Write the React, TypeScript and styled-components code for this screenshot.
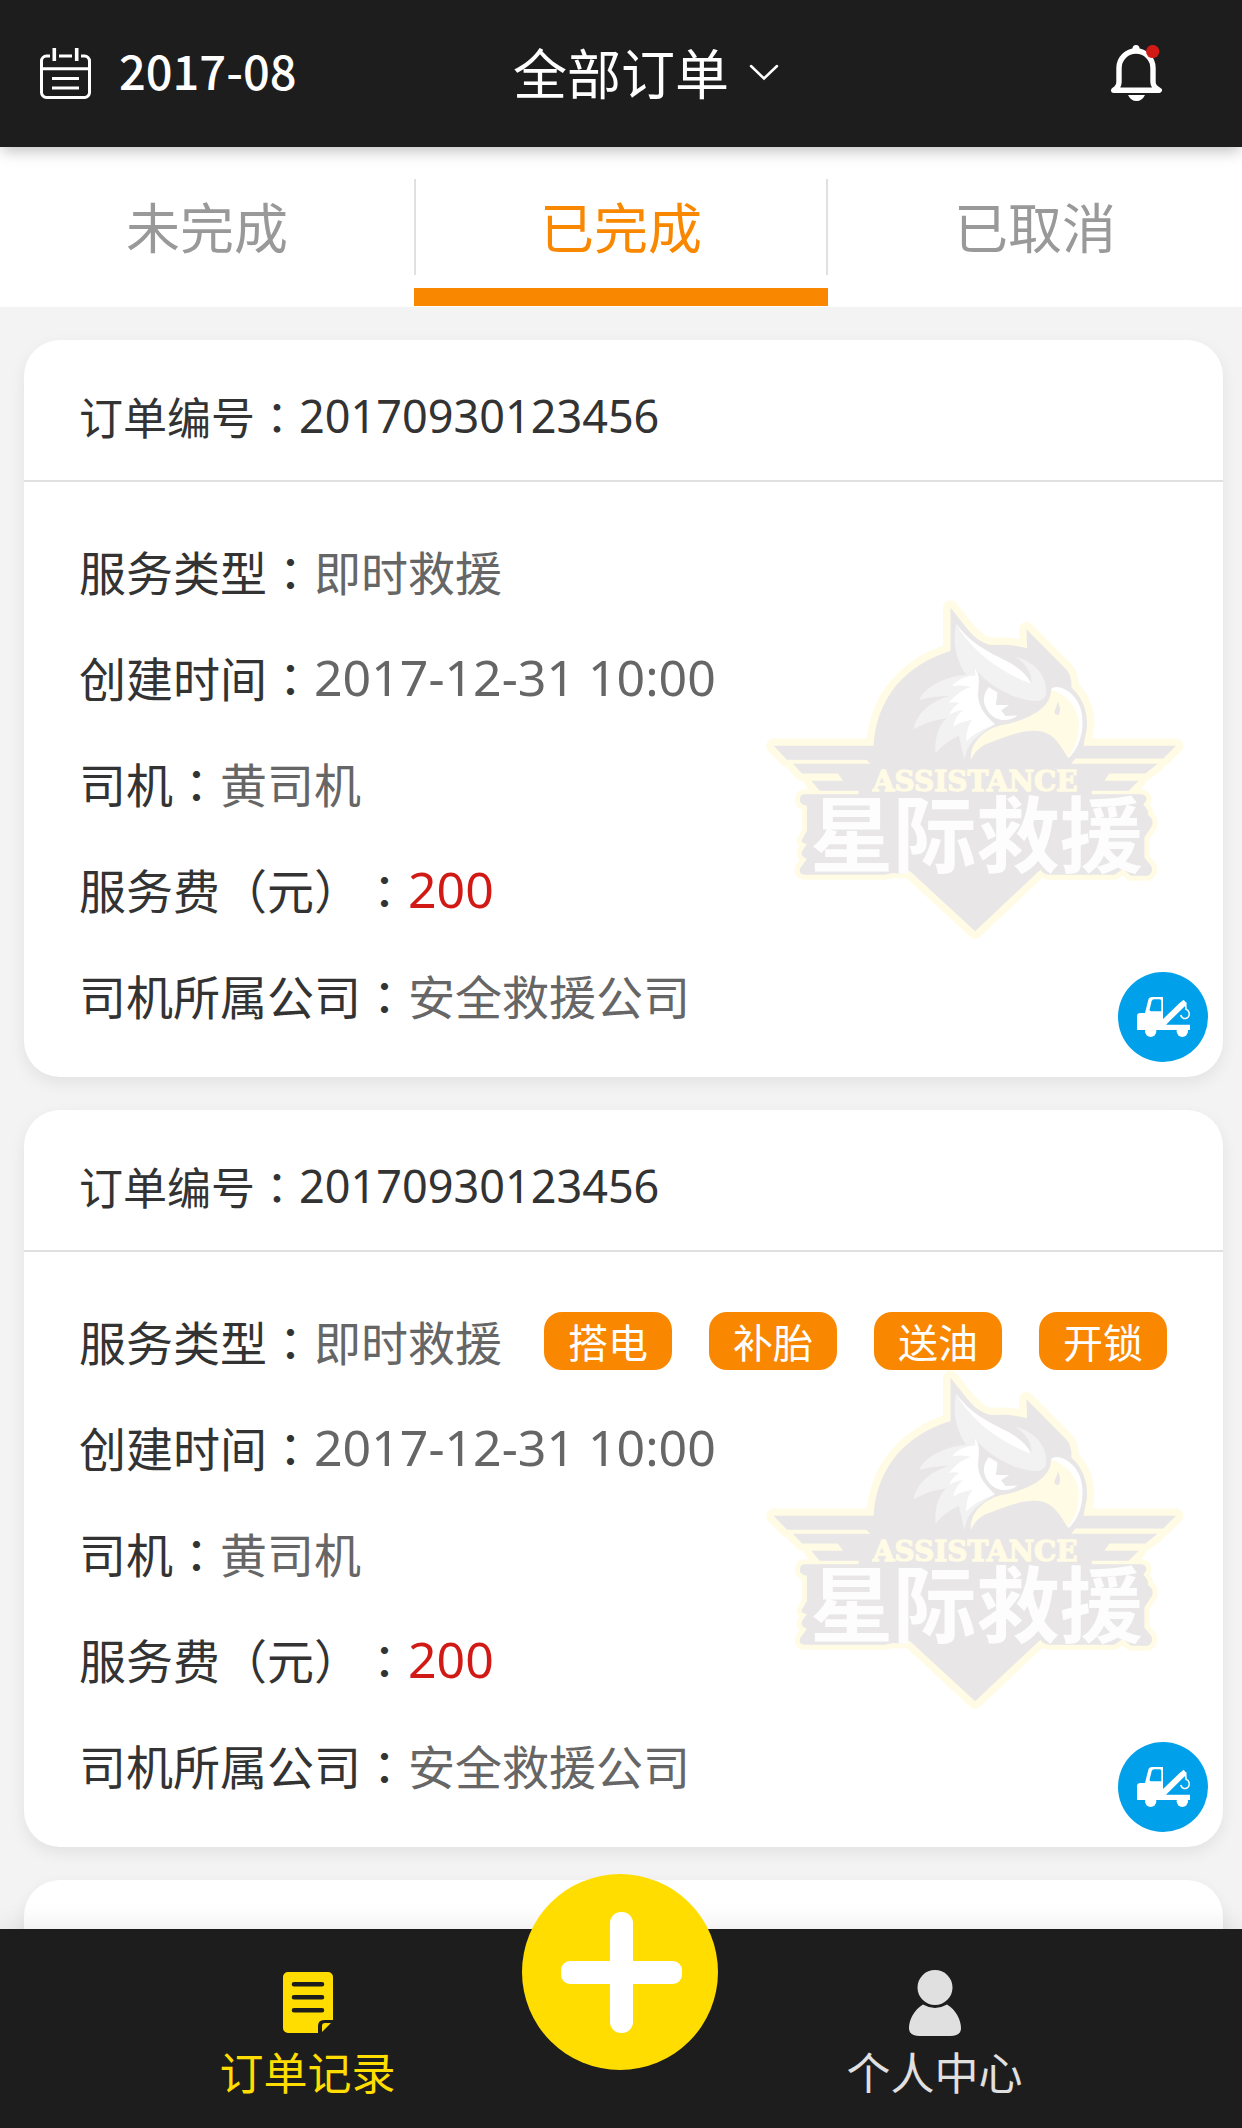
import React from "react";
import styled, { createGlobalStyle } from "styled-components";

const color = {
  bar: "#1d1d1d",
  page: "#f3f3f3",
  line: "#e0e0e0",
  text: "#333333",
  soft: "#666666",
  mute: "#999999",
  orange: "#f98700",
  yellow: "#ffdd00",
  red: "#d11a15",
  blue: "#00a0ea",
  white: "#ffffff",
};

const cjk = '"Noto Sans CJK SC", sans-serif';
const latin = '"Noto Sans", "Open Sans", "Noto Sans CJK SC", sans-serif';

const GlobalStyle = createGlobalStyle`
  *, *::before, *::after { box-sizing: border-box; }
  body { margin: 0; background: ${color.page}; }
  button, select { margin: 0; padding: 0; border: 0; background: none; font: inherit; color: inherit; cursor: pointer; }
  svg { display: block; flex: none; }
`;

const Screen = styled.div`
  display: flex;
  flex-direction: column;
  height: 100vh;
  overflow: hidden;
  font-family: ${cjk};
  color: ${color.text};
  text-spacing-trim: space-all;
`;

const TopBar = styled.header`
  position: relative;
  z-index: 1;
  flex: none;
  display: grid;
  grid-template-columns: 1fr auto 1fr;
  align-items: center;
  height: 147px;
  padding: 0 40px;
  background: ${color.bar};
  color: ${color.white};
  box-shadow: 0 6px 14px -2px rgba(0, 0, 0, 0.25);
`;

const MonthButton = styled.button`
  justify-self: start;
  display: flex;
  align-items: center;
  gap: 28px;
  font-size: 47px;
  font-weight: 500;
  line-height: 72px;
`;

const MonthText = styled.span`
  padding-bottom: 8px;
  line-height: 64px;
`;

const Filter = styled.div`
  position: relative;
`;

const FilterSelect = styled.select`
  display: block;
  appearance: none;
  outline: none;
  padding-bottom: 4px;
  font-size: 54px;
  line-height: 80px;

  option {
    font-size: 36px;
    color: ${color.text};
  }
`;

const Chevron = styled.svg`
  position: absolute;
  left: 100%;
  top: 50%;
  margin: -10px 0 0 20px;
  pointer-events: none;
`;

const BellButton = styled.button`
  justify-self: end;
  margin-right: 39px;
`;

const TabList = styled.nav`
  flex: none;
  display: grid;
  grid-template-columns: repeat(3, 1fr);
  background: ${color.white};
`;

const TabButton = styled.button<{ $active: boolean }>`
  display: flex;
  flex-direction: column;
  padding: 32px 0 1px;
  font-size: 54px;
  line-height: 94px;
  color: ${(p) => (p.$active ? color.orange : color.mute)};

  &::after {
    content: "";
    height: 18px;
    width: 100%;
    margin-top: 13px;
    background: ${(p) => (p.$active ? color.orange : "transparent")};
  }
`;

const TabLabel = styled.span<{ $divided: boolean }>`
  width: 100%;
  height: 96px;
  border: solid ${color.line};
  border-width: ${(p) => (p.$divided ? "0 2px" : "0")};
`;

const OrderList = styled.main`
  flex: 1;
  min-height: 0;
  display: flex;
  flex-direction: column;
  gap: 33px;
  padding: 33px 19px 0 24px;
  overflow: hidden;
`;

const Card = styled.article`
  position: relative;
  flex: none;
  min-height: 140px;
  border-radius: 36px;
  background: ${color.white};
  box-shadow: 0 6px 16px rgba(0, 0, 0, 0.07);
`;

const CardHeader = styled.h2`
  display: flex;
  align-items: center;
  height: 142px;
  margin: 0;
  padding: 12px 55px 0;
  border-bottom: 2px solid ${color.line};
  font-size: 44px;
  font-weight: 400;
  line-height: 60px;
`;

const OrderNumber = styled.span`
  font-family: ${latin};
  font-size: 45px;
`;

const Fields = styled.dl`
  position: relative;
  display: flex;
  flex-direction: column;
  gap: 36px;
  margin: 0;
  padding: 54px 55px 47px;
  font-size: 47px;
  line-height: 70px;
`;

const Field = styled.div`
  display: flex;
  align-items: center;
  height: 70px;
  white-space: nowrap;
`;

const Term = styled.dt``;

const Value = styled.dd<{ $tone?: string; $numeric?: boolean }>`
  display: flex;
  align-items: center;
  margin: 0;
  color: ${(p) => p.$tone ?? color.soft};
  font-family: ${(p) => (p.$numeric ? latin : cjk)};
  font-size: ${(p) => (p.$numeric ? "50px" : "47px")};
`;

/* Traditional-style punctuation sits in the middle of its square */
const Mark = styled.span`
  font-family: "Noto Sans CJK TC", sans-serif;
`;

const Tags = styled.ul`
  display: flex;
  gap: 37px;
  margin: 0 0 0 42px;
  padding: 0;
  list-style: none;
`;

const Tag = styled.li`
  width: 128px;
  height: 58px;
  border-radius: 18px;
  background: ${color.orange};
  color: ${color.white};
  font-size: 40px;
  line-height: 58px;
  text-align: center;
`;

const Watermark = styled.div`
  position: absolute;
  top: 259px;
  right: 37px;
`;

const TruckBadge = styled.span`
  position: absolute;
  right: 15px;
  bottom: 15px;
`;

const BottomBar = styled.nav`
  position: relative;
  flex: none;
  display: grid;
  grid-template-columns: 1fr 1fr;
  gap: 12px;
  height: 199px;
  background: ${color.bar};
  box-shadow: 0 -4px 24px rgba(0, 0, 0, 0.08);
`;

const NavLink = styled.a<{ $active?: boolean }>`
  display: flex;
  flex-direction: column;
  align-items: center;
  justify-content: flex-end;
  gap: 3px;
  padding-bottom: 25px;
  color: ${(p) => (p.$active ? color.yellow : color.line)};
  font-size: 44px;
  line-height: 64px;
  text-decoration: none;
`;

const AddButton = styled.button`
  position: absolute;
  left: 50%;
  top: -55px;
  width: 196px;
  height: 196px;
  margin-left: -99px;
  border-radius: 50%;
  background: ${color.yellow};
`;

function CalendarIcon() {
  return (
    <svg width="51" height="51" viewBox="0 0 51 51" fill="none" stroke="currentColor" strokeWidth="3">
      <path d="M10 8H6.500a5 5 0 0 0-5 5V44.500a5 5 0 0 0 5 5H44.500a5 5 0 0 0 5-5V13a5 5 0 0 0-5-5H41M19 8H32M1.500 20.700H49.500M12 30.500H39M12 40H39" />
      <path d="M14.300 0V13M36.700 0V13" strokeWidth="3.600" />
    </svg>
  );
}

function BellIcon() {
  return (
    <svg width="52" height="57" viewBox="0 0 52 57">
      <g fill="none" stroke="#fff" strokeWidth="5.400" strokeLinecap="round" strokeLinejoin="round">
        <path d="M8 37V23a17 17 0 0 1 34 0V37Q42 42 48.300 45.300H2.700Q8 42 8 37" />
      </g>
      <circle cx="25" cy="3.500" r="3.500" fill="#fff" />
      <path d="M17 50H34Q31 56 25.500 56T17 50" fill="#fff" />
      <circle cx="41.700" cy="6.500" r="6.600" fill={color.red} />
    </svg>
  );
}

function DocumentIcon() {
  return (
    <svg width="50" height="64" viewBox="0 0 50 64" fill="currentColor">
      <path d="M5 0H45a5 5 0 0 1 5 5V48H41Q35 48 35 54V61H5a5 5 0 0 1-5-5V5a5 5 0 0 1 5-5Z" />
      <path d="M48 51H42Q39 51 39 54V60Z" />
      <path d="M11 12.300H39M11 25.300H39M11 38.300H39" stroke={color.bar} strokeWidth="4.600" strokeLinecap="round" />
    </svg>
  );
}

function PersonIcon() {
  return (
    <svg width="52" height="66" viewBox="0 0 52 66" fill="currentColor">
      <circle cx="26" cy="17.500" r="17.500" />
      <path d="M14 34.500C5 40 0 50 0 58Q0 66 11 66H41Q52 66 52 58C52 50 47 40 38 34.500Q26 41.500 14 34.500Z" />
    </svg>
  );
}

function TruckIcon() {
  return (
    <svg width="90" height="90" viewBox="114 96 270 270" role="img" aria-label="拖车">
      <circle cx="249" cy="231" r="135" fill={color.blue} />
      <g fill="#fff">
        <path d="M171 270V229Q171 219 182 219H195L205 179Q207 171 216 171H249V237L299 189L311 179L319 189L316 197L258 254H330V270Z" />
        <circle cx="212" cy="274" r="17" />
        <circle cx="307" cy="274" r="17" />
      </g>
      <path d="M222 178H239Q244 178 244 183V214H213Q208 214 209 208L215 184Q217 178 222 178Z" fill={color.blue} />
      <path d="M317 187L318 208C328 211 331 224 324 232C317 239 305 236 302 225" fill="none" stroke="#fff" strokeWidth="4.500" />
    </svg>
  );
}

const emblemBody =
  "M603 80C640 125 665 165 697 182Q712 193 735 192Q785 189 833 202L831 145L950 265Q968 285 966 320C1005 355 1018 405 1011 450L1002 495H1280L1242 533H978L965 549H1225L1188 578H1080L1065 600H1168L1138 630H1027V860H880L677 1052L480 870L327 860V630H210L185 600H280L265 578H157L130 549H363L350 537H112L72 495H372C380 350 470 250 603 210Z";
const emblemPlate =
  "M165 640H1175Q1195 642 1190 660L1182 672Q1200 690 1195 702Q1215 715 1208 735L1185 770V830L1205 855Q1215 875 1195 885H1145L1120 865L1095 882H900Q880 882 870 862H490Q470 882 450 878L430 877L405 882H165Q145 880 152 862L172 835Q150 825 158 810L172 790Q148 785 160 772L172 750V675Q145 670 152 650Q155 640 165 640Z";

function Emblem() {
  return (
    <svg width="423" height="342" viewBox="40 55 1270 1025">
      <g fill="#fffbe5" stroke="#fffbe5" strokeLinejoin="round">
        <path d={emblemBody} strokeWidth="44" />
        <path d={emblemPlate} strokeWidth="30" />
      </g>
      <g fill="#e8e6e7">
        <path d={emblemBody} />
        <path d={emblemPlate} />
      </g>
      <g fill="#f2f2f3">
        <path d="M620 128C660 190 760 240 845 308C850 275 825 245 798 228C860 243 895 290 890 340C882 365 850 368 790 345C730 320 700 290 675 262L650 282C615 230 610 180 620 128Z" />
        <path d="M650 282C590 285 520 320 510 357Q550 345 602 345C540 360 500 400 492 445Q535 420 590 412C560 440 555 490 558 518Q585 485 628 465L645 538C650 500 665 480 700 455L735 430C700 400 680 370 688 330V300L675 262Z" />
      </g>
      <g fill="#ffffff">
        <path d="M620 128C660 190 735 222 780 245Q830 275 845 308C790 290 730 250 695 220Q640 170 620 128Z" />
        <path d="M676 262C690 280 690 300 686 320C680 360 695 395 737 430C700 445 670 460 650 482C650 455 655 435 669 417C650 420 630 425 612 437C615 415 625 400 641 388Q620 388 598 403Q610 375 630 366Q612 362 597 366C620 340 640 325 664 318Q640 312 608 315C625 295 650 285 678 284Z" />
        <path d="M718 318L744 335L739 372L779 372L755 388L768 405L804 404C780 425 735 422 715 390C698 365 700 340 718 318Z" />
        <path d="M905 325C920 308 960 325 980 355C1012 400 1005 490 957 532Z" />
      </g>
      <path
        d="M905 326C945 338 980 370 988 420C990 470 975 505 955 530C935 500 920 465 880 453C830 440 760 470 705 492Q675 510 664 538C660 490 700 445 760 432C820 420 905 390 905 326Z"
        fill="#fffbe5"
      />
      <path d="M925 362C935 380 932 395 928 402L917 400C912 390 920 385 925 362Z" fill="#e8e6e7" />
      <text x="677" y="632" textAnchor="middle" fontFamily='"DejaVu Serif", serif' fontWeight="700" fontSize="84" fill="#fffbe5" stroke="#fffbe5" strokeWidth="4">
        ASSISTANCE
      </text>
      <text x="681" y="857" textAnchor="middle" fontFamily={`"Liberation Sans", ${cjk}`} fontWeight="700" fontSize="250" fill="#fdfdfd">
        星际救援
      </text>
    </svg>
  );
}

type Order = {
  id: string;
  service: string;
  created: string;
  driver: string;
  fee: string;
  company: string;
  tags: string[];
};

const baseOrder: Order = {
  id: "20170930123456",
  service: "即时救援",
  created: "2017-12-31 10:00",
  driver: "黄司机",
  fee: "200",
  company: "安全救援公司",
  tags: [],
};

const orders: Order[] = [baseOrder, { ...baseOrder, tags: ["搭电", "补胎", "送油", "开锁"] }];

function OrderCard({ order }: { order: Order }) {
  return (
    <Card>
      <CardHeader>
        订单编号<Mark>：</Mark>
        <OrderNumber>{order.id}</OrderNumber>
      </CardHeader>
      <Watermark>
        <Emblem />
      </Watermark>
      <Fields>
        <Field>
          <Term>服务类型<Mark>：</Mark></Term>
          <Value>
            {order.service}
            {order.tags.length > 0 && (
              <Tags>
                {order.tags.map((tag) => (
                  <Tag key={tag}>{tag}</Tag>
                ))}
              </Tags>
            )}
          </Value>
        </Field>
        <Field>
          <Term>创建时间<Mark>：</Mark></Term>
          <Value $numeric>{order.created}</Value>
        </Field>
        <Field>
          <Term>司机<Mark>：</Mark></Term>
          <Value>{order.driver}</Value>
        </Field>
        <Field>
          <Term>服务费<Mark>（</Mark>元<Mark>）：</Mark></Term>
          <Value $numeric $tone={color.red}>{order.fee}</Value>
        </Field>
        <Field>
          <Term>司机所属公司<Mark>：</Mark></Term>
          <Value>{order.company}</Value>
        </Field>
      </Fields>
      <TruckBadge>
        <TruckIcon />
      </TruckBadge>
    </Card>
  );
}

const tabs = ["未完成", "已完成", "已取消"];

export default function App() {
  const [active, setActive] = React.useState(1);

  return (
    <Screen>
      <GlobalStyle />
      <TopBar>
        <MonthButton type="button">
          <CalendarIcon />
          <MonthText>2017-08</MonthText>
        </MonthButton>
        <Filter>
          <FilterSelect aria-label="订单筛选" defaultValue="all">
            <option value="all">全部订单</option>
          </FilterSelect>
          <Chevron width="30" height="18" viewBox="0 0 30 18" fill="none" stroke="currentColor" strokeWidth="2.500">
            <path d="M2 2L15 14.500L28 2" strokeLinecap="round" />
          </Chevron>
        </Filter>
        <BellButton type="button" aria-label="消息">
          <BellIcon />
        </BellButton>
      </TopBar>
      <TabList>
        {tabs.map((tab, i) => (
          <TabButton key={tab} type="button" $active={i === active} onClick={() => setActive(i)}>
            <TabLabel $divided={i === 1}>{tab}</TabLabel>
          </TabButton>
        ))}
      </TabList>
      <OrderList>
        {orders.map((order, i) => (
          <OrderCard key={i} order={order} />
        ))}
        <Card />
      </OrderList>
      <BottomBar>
        <NavLink href="#orders" $active>
          <DocumentIcon />
          订单记录
        </NavLink>
        <NavLink href="#profile">
          <PersonIcon />
          个人中心
        </NavLink>
        <AddButton type="button" aria-label="新建订单">
          <svg width="196" height="196" viewBox="0 0 196 196" fill="#fff">
            <rect x="88" y="38" width="23" height="121" rx="11" />
            <rect x="39" y="87" width="121" height="23" rx="9" />
          </svg>
        </AddButton>
      </BottomBar>
    </Screen>
  );
}
